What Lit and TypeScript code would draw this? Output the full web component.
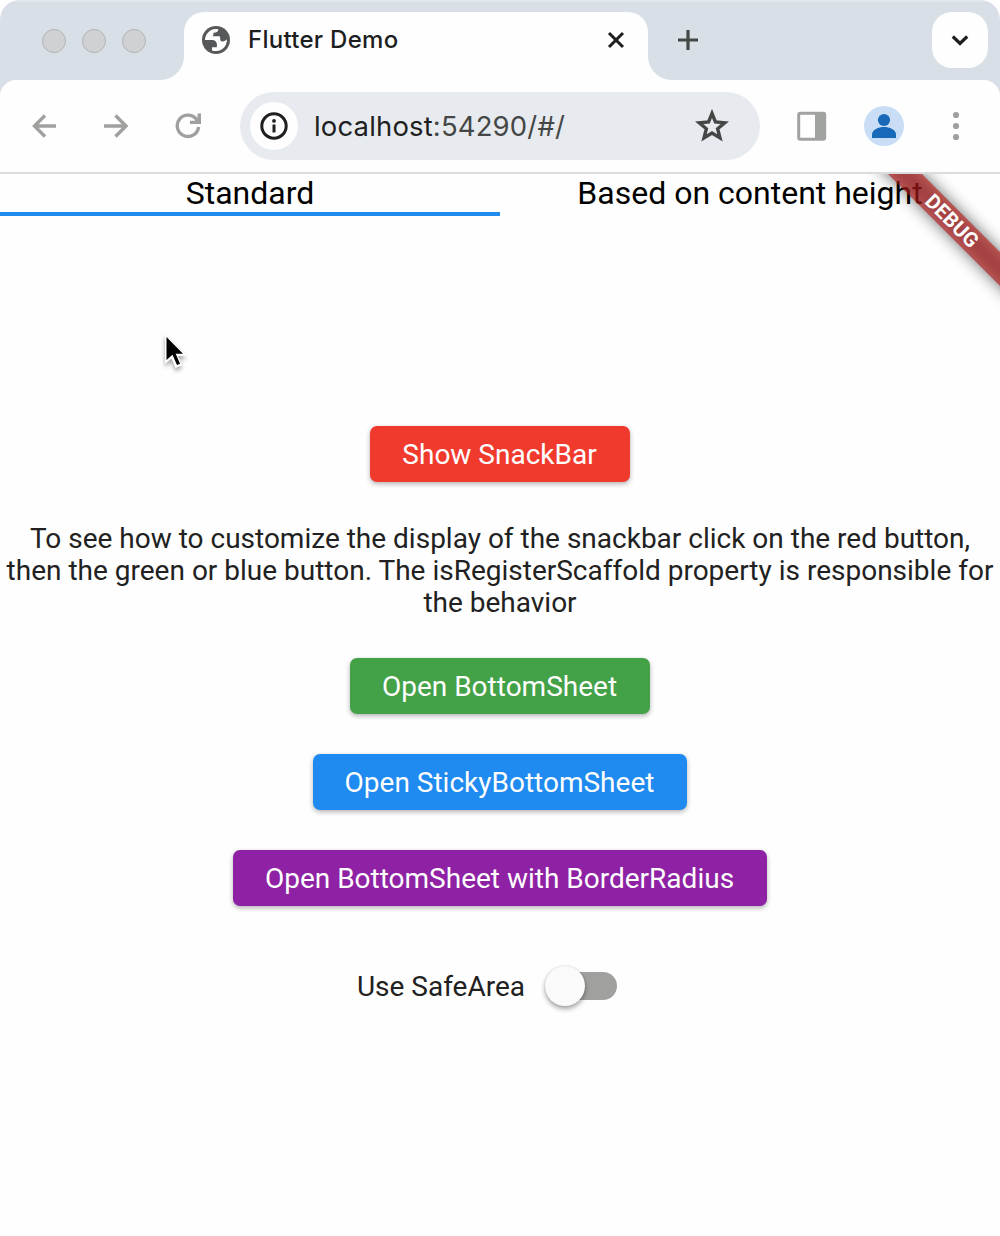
import { LitElement, html, css } from "lit";
import { customElement, state } from "lit/decorators.js";

@customElement("browser-bar")
class BrowserBar extends LitElement {
  static styles = css`
    :host { display: block; background: #d8dfe7; border-radius: 20px 20px 0 0; overflow: hidden; }
    svg { display: block; flex: none; }
    .strip { display: flex; height: 80px; box-sizing: border-box; padding: 12px 12px 0 42px; box-shadow: inset 0 2px #e3e8ed; }
    .lights { display: flex; gap: 16px; padding-top: 17px; width: 142px; }
    .light { width: 24px; height: 24px; box-sizing: border-box; border-radius: 50%; background: #d0d1d2; border: 1px solid #b3b3b2; }
    .tab { position: relative; display: flex; align-items: center; width: 464px; height: 68px; box-sizing: border-box; padding: 0 22px 12px 18px; background: #fefefe; border-radius: 20px 20px 0 0; }
    .tab::before, .tab::after { content: ""; position: absolute; bottom: 0; width: 24px; height: 24px; }
    .tab::before { left: -24px; background: radial-gradient(circle at 0 0, transparent 23.5px, #fefefe 24.5px); }
    .tab::after { right: -24px; background: radial-gradient(circle at 24px 0, transparent 23.5px, #fefefe 24.5px); }
    .title { flex: 1; margin-left: 18px; font: 500 24px/28px Inter, sans-serif; letter-spacing: 0.28px; color: #1d1e1f; white-space: nowrap; }
    .plus { margin: 18px 0 0 30px; }
    .menu { margin-left: auto; width: 56px; height: 56px; border-radius: 20px; background: #fefefe; display: grid; place-items: center; }
    .tools { display: flex; align-items: center; height: 94px; box-sizing: border-box; border-bottom: 2px solid #dbdbdb; background: #fefefe; border-radius: 16px 16px 0 0; padding: 0 28px; }
    .fwd { margin-left: 40px; }
    .reload { margin-left: 40px; }
    .omni { display: flex; align-items: center; width: 520px; height: 68px; box-sizing: border-box; margin-left: 36px; padding: 0 32px 0 10px; border-radius: 34px; background: #e7ebef; }
    .info { width: 48px; height: 48px; border-radius: 50%; background: #fefefe; display: grid; place-items: center; }
    .url { flex: 1; margin-left: 16px; font: 400 27.5px/34px Inter, sans-serif; letter-spacing: 0.15px; color: #454746; white-space: nowrap; }
    .host { color: #1f1f1f; }
    .panel { margin-left: 36px; }
    .avatar { margin-left: 36px; }
    .dots { margin-left: 36px; }
  `;

  render() {
    return html`
      <div class="strip">
        <div class="lights"><span class="light"></span><span class="light"></span><span class="light"></span></div>
        <div class="tab">
          <svg width="28" height="28" viewBox="0 0 28 28"><circle cx="14" cy="14" r="14" fill="#565859"/><path fill="#fefefe" d="M3 14A11.100 11.100 0 0 1 16.300 3.200C16.500 5.500 15 6.600 11.600 6.800C11.300 8 11.600 9 10.700 10.300H17.500C19 11.500 17.300 14.500 19.500 15.300C21.500 16 23.300 15 24.900 13.300A11.100 11.100 0 0 1 10 24.400V21.300H14.600C16 17 13.500 14 10 14Z"/></svg>
          <span class="title">Flutter Demo</span>
          <svg width="20" height="20" viewBox="0 0 20 20"><path d="M3 3 17 17M17 3 3 17" stroke="#1f1f1f" stroke-width="3" fill="none"/></svg>
        </div>
        <svg class="plus" width="20" height="20" viewBox="0 0 20 20"><path d="M10 0V20M0 10H20" stroke="#454746" stroke-width="3.200"/></svg>
        <div class="menu"><svg width="20" height="20" viewBox="0 0 20 20"><path d="M2.800 6.500 10 13.500 17.200 6.500" stroke="#1f1f1f" stroke-width="3.200" fill="none"/></svg></div>
      </div>
      <div class="tools">
        <svg width="32" height="32" viewBox="0 0 32 32"><path d="M28 16H6M17 5.500 6.500 16 17 26.500" stroke="#a0a09e" stroke-width="3.400" fill="none"/></svg>
        <svg class="fwd" width="32" height="32" viewBox="0 0 32 32"><path d="M4 16H26M15.500 5.500 26 16 15.500 26.500" stroke="#a0a09e" stroke-width="3.400" fill="none"/></svg>
        <svg class="reload" width="32" height="32" viewBox="0 0 32 32"><path d="M26.600 17A10.700 10.700 0 1 1 24 8.700L27 12" stroke="#a0a09e" stroke-width="3.300" fill="none"/><path d="M25.500 3.500H29V14H18V10.800H22.500L25.500 8.500Z" fill="#a0a09e"/></svg>
        <div class="omni">
          <div class="info"><svg width="28" height="28" viewBox="0 0 28 28"><circle cx="14" cy="14" r="12.200" fill="none" stroke="#1f1f1f" stroke-width="3"/><path d="M14 12.500V20.500" stroke="#1f1f1f" stroke-width="3"/><circle cx="14" cy="8.900" r="1.900" fill="#1f1f1f"/></svg></div>
          <span class="url"><span class="host">localhost</span>:54290/#/</span>
          <svg width="34" height="34" viewBox="0 0 32 32" style="margin-right:-1px"><path fill="none" stroke="#454746" stroke-width="3.200" d="M16 4.200 19.200 12.200 28 13 21.300 18.600 23.500 27.200 16 22.600 8.500 27.200 10.700 18.600 4 13 12.800 12.200Z"/></svg>
        </div>
        <svg class="panel" width="32" height="32" viewBox="0 0 32 32"><rect x="2.700" y="3.200" width="26" height="26" rx="1.500" fill="#fefefe" stroke="#a0a3a0" stroke-width="3"/><path d="M19 2H28L30 4V28L28 30H19Z" fill="#a0a3a0"/></svg>
        <svg class="avatar" width="40" height="40" viewBox="0 0 40 40"><circle cx="20" cy="20" r="20" fill="#c9def6"/><circle cx="20" cy="14" r="6.100" fill="#1869b8"/><path d="M8 32V28.500C8 23.500 14.500 21 20 21S32 23.500 32 28.500V32Z" fill="#1869b8"/></svg>
        <svg class="dots" width="32" height="32" viewBox="0 0 32 32"><g fill="#a0a09e"><circle cx="16" cy="5" r="3.100"/><circle cx="16" cy="16" r="3.100"/><circle cx="16" cy="27" r="3.100"/></g></svg>
      </div>`;
  }
}

@customElement("app-root")
class AppRoot extends LitElement {
  static styles = css`
    :host { display: block; width: 1000px; height: 1236px; overflow: hidden; background: #fefefe; font-family: Roboto, sans-serif; }
    .page { position: relative; height: 1062px; background: #fefefe; overflow: hidden; }
    .tabs { display: grid; grid-template-columns: 1fr 1fr; height: 42px; }
    .tab { box-sizing: border-box; text-align: center; font-size: 32px; line-height: 38px; color: #000; border-bottom: 4px solid transparent; white-space: nowrap; }
    .tab.on { border-color: #1f8bef; }
    .body { display: flex; flex-direction: column; align-items: center; padding-top: 210px; }
    .btn { display: block; height: 56px; box-sizing: border-box; margin: 0 0 40px; padding: 2px 32.5px 0 31.5px; border: 0; border-radius: 7px; color: #fefefe; font: 400 28px/54px Roboto, sans-serif; box-shadow: 0 2px 5px rgba(0,0,0,.3); white-space: nowrap; }
    .red { background: #f13a2e; min-width: 260px; }
    .green { background: #43a148; }
    .blue { background: #1f8af0; }
    .purple { background: #8e21a4; }
    .note { margin: 0; padding: 1px 0 39px; text-align: center; font-size: 28px; line-height: 32px; color: #212121; white-space: nowrap; }
    .row { display: flex; align-items: center; margin-top: 20px; height: 40px; padding-right: 26px; gap: 20px; }
    .label { padding-top: 2px; font-size: 28px; line-height: 32px; color: #212121; }
    .switch { display: flex; align-items: center; width: 72px; height: 40px; }
    .track { flex: 1; height: 28px; margin-left: -20px; border-radius: 0 14px 14px 0; background: #a0a09e; }
    .thumb { position: relative; width: 40px; height: 40px; border-radius: 50%; background: #fafafa; box-shadow: 0 3px 5px rgba(0,0,0,.35), 0 0 2px rgba(0,0,0,.15); }
    .debug { position: absolute; left: 852px; top: 35px; width: 200px; height: 24px; transform: rotate(45deg); text-align: center; color: #fefefe; font-weight: 700; font-size: 20.4px; line-height: 25px; letter-spacing: 0.2px; }
    .debug::before { content: ""; position: absolute; inset: 0; background: rgba(0,0,0,.55); filter: blur(8px); }
    .word { position: relative; display: block; height: 24px; background: rgba(183,28,28,.63); }
    .cursor { position: absolute; left: 160px; top: 155px; filter: drop-shadow(0 3px 2px rgba(0,0,0,.35)); }
  `;

  @state() private selected = 0;

  render() {
    return html`
      <browser-bar></browser-bar>
      <main class="page">
        <div class="tabs">
          ${["Standard", "Based on content height"].map((t, i) => html`<div class="tab ${i === this.selected ? "on" : ""}" @click=${() => (this.selected = i)}><span>${t}</span></div>`)}
        </div>
        <div class="body">
          <button class="btn red">Show SnackBar</button>
          <p class="note">To see how to customize the display of the snackbar click on the red button,<br>then the green or blue button. The isRegisterScaffold property is responsible for<br>the behavior</p>
          <button class="btn green">Open BottomSheet</button>
          <button class="btn blue">Open StickyBottomSheet</button>
          <button class="btn purple">Open BottomSheet with BorderRadius</button>
          <div class="row">
            <span class="label">Use SafeArea</span>
            <div class="switch"><span class="thumb"></span><span class="track"></span></div>
          </div>
        </div>
        <div class="debug"><span class="word">DEBUG</span></div>
        <svg class="cursor" width="30" height="42" viewBox="0 0 30 42"><path d="M5 4V35L11.500 29.500 15.500 39 22 36.200 18 27H26.500Z" fill="#fff"/><path d="M6.500 8V31L12.500 25.800 17 36 20 34.700 15.700 24.700H23Z" fill="#000"/></svg>
      </main>`;
  }
}
